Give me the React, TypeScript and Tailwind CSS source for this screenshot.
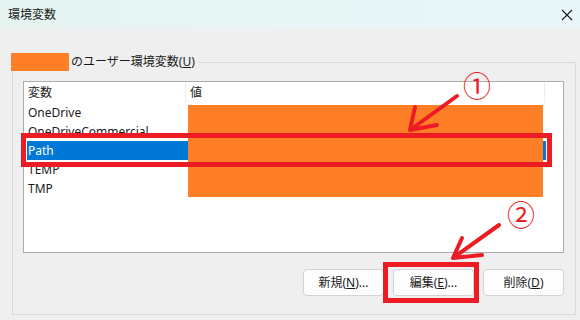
import React from "react";

const font = {
  fontFamily: '"Noto Sans", "Noto Sans CJK JP", sans-serif',
};

const rows = ["OneDrive", "OneDriveCommercial", "Path", "TEMP", "TMP"];

const Key = ({ k }: { k: string }) => <span className="underline">{k}</span>;

const Button = ({
  children,
}: React.PropsWithChildren<{}>): JSX.Element => (
  <button className="w-[81px] h-[27px] rounded-[4px] border border-[#d3d3d3] bg-[#fdfdfd] text-[12px] text-[#1b1b1b] flex items-center justify-center">
    {children}
  </button>
);

export default function App(): JSX.Element {
  return (
    <div
      className="relative w-[580px] h-[320px] overflow-hidden bg-[#efefef] text-[#1b1b1b]"
      style={font}
    >
      {/* title bar */}
      <div className="h-[29px] flex items-center justify-between pl-[8px] pr-[6px] bg-gradient-to-r from-[#e5f4f1] to-[#e8f6f9]">
        <span className="text-[12px] leading-none">環境変数</span>
        <svg width="12" height="12" viewBox="0 0 12 12" className="mr-[1px]">
          <path d="M1 1L11 11M11 1L1 11" stroke="#1b1b1b" strokeWidth="1.1" />
        </svg>
      </div>

      {/* group box */}
      <div className="relative ml-[12px] mt-[33px] w-[564px] h-[253px] border border-[#dadada]">
        <div className="absolute -top-[10px] -left-[2px] flex items-center gap-[2px] bg-[#efefef] pr-[4px]">
          <div className="w-[58px] h-[18px] bg-[#ff7f27]" />
          <span className="text-[12px] leading-[18px]">
            のユーザー環境変数(<Key k="U" />)
          </span>
        </div>

        <div className="flex flex-col items-start pl-[10px] pt-[18px]">
          {/* list */}
          <div className="w-[541px] h-[172px] border border-[#adadad] bg-white text-[12px]">
            <div className="flex h-[21px] items-center">
              <div className="w-[162px] h-full pl-[4px] flex items-center border-r border-[#ececec]">
                変数
              </div>
              <div className="w-[359px] h-full pl-[4px] flex items-center border-r border-[#ececec]">
                値
              </div>
            </div>
            <div className="flex flex-col">
              {rows.map((r) =>
                r === "Path" ? (
                  <div key={r} className="h-[19px] flex items-center pl-[3px]">
                    <div className="w-[519px] h-[19px] bg-[#0078d7] text-white pl-[1px] flex items-center">
                      {r}
                    </div>
                  </div>
                ) : (
                  <div key={r} className="h-[19px] flex items-center pl-[4px]">
                    {r}
                  </div>
                )
              )}
            </div>
          </div>

          {/* buttons */}
          <div className="w-[541px] flex justify-end gap-[9px] mt-[16px]">
            <Button>
              新規(<Key k="N" />)...
            </Button>
            <Button>
              編集(<Key k="E" />)...
            </Button>
            <Button>
              削除(<Key k="D" />)
            </Button>
          </div>
        </div>
      </div>

      {/* redaction */}
      <div className="absolute left-[188px] top-[105px] w-[355px] h-[92px] bg-[#ff7f27]" />

      {/* annotations */}
      <div className="absolute left-[21px] top-[133px] w-[531px] h-[34px] border-[5px] border-[#ed1c24]" />
      <div className="absolute left-[383px] top-[262px] w-[96px] h-[41px] border-[5px] border-[#ed1c24]" />

      <span
        className="absolute left-[463px] top-[69px] text-[28px] leading-[32px] text-[#ed1c24]"
        style={{ fontFamily: '"Noto Sans CJK JP", sans-serif' }}
      >
        ①
      </span>
      <span
        className="absolute left-[507px] top-[198px] text-[28px] leading-[32px] text-[#ed1c24]"
        style={{ fontFamily: '"Noto Sans CJK JP", sans-serif' }}
      >
        ②
      </span>

      <svg
        className="absolute left-0 top-0 pointer-events-none"
        width="580"
        height="320"
        viewBox="0 0 580 320"
      >
        <g
          stroke="#ed1c24"
          strokeWidth="4"
          strokeLinecap="round"
          strokeLinejoin="round"
          fill="none"
        >
          <path d="M457 96L410 130M410 130L415 107M410 130L437 125" />
          <path d="M499 225L453 258M453 258L462 238M453 258L482 255" />
        </g>
      </svg>
    </div>
  );
}
